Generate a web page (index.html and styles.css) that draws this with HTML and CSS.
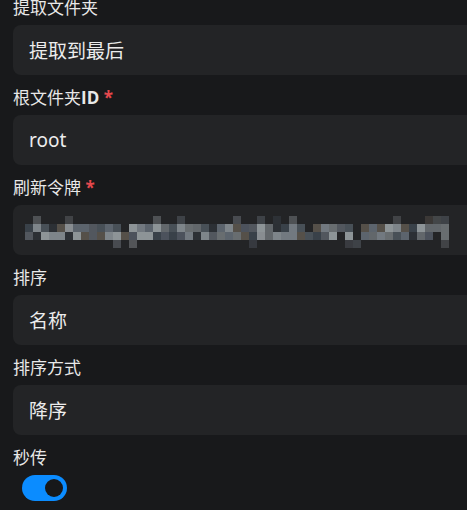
FILE: index.html
```html
<!DOCTYPE html>
<html lang="zh">
<head>
<meta charset="utf-8">
<link rel="stylesheet" href="styles.css">
</head>
<body>
<div class="form">
  <div class="field">
    <label class="label">提取文件夹</label>
    <div class="input">提取到最后</div>
  </div>
  <div class="field">
    <label class="label">根文件夹<span class="latin">ID</span> <span class="req">*</span></label>
    <div class="input">root</div>
  </div>
  <div class="field">
    <label class="label">刷新令牌 <span class="req">*</span></label>
    <div class="input"><svg id="token" class="token" width="430" height="32" viewBox="0 0 430 32"></svg></div>
  </div>
  <div class="field">
    <label class="label">排序</label>
    <div class="input">名称</div>
  </div>
  <div class="field">
    <label class="label">排序方式</label>
    <div class="input">降序</div>
  </div>
  <div class="field">
    <label class="label">秒传</label>
    <div class="switch"><span class="knob"></span></div>
  </div>
</div>
<script src="script.js"></script>
</body>
</html>
```
FILE: styles.css
```css
html, body {
  margin: 0;
  padding: 0;
  background: #18191b;
  overflow: hidden;
}
body {
  font-family: "Noto Sans", "Noto Sans CJK SC", sans-serif;
  color: #e8e8e8;
}
.form {
  width: 500px;
  padding: 0 0 0 13px;
  margin-top: -15px;
  display: flex;
  flex-direction: column;
}
.field {
  display: flex;
  flex-direction: column;
  padding-top: 10px;
}
.label {
  display: block;
  height: 24px;
  line-height: 25px;
  font-size: 17px;
  font-weight: 400;
  color: #e8e8e8;
  margin-bottom: 6px;
}
.latin {
  font-family: "Open Sans", "Noto Sans", sans-serif;
  font-weight: 700;
}
.req {
  color: #e5484d;
  font-weight: 700;
}
.input {
  height: 50px;
  box-sizing: border-box;
  background: #232426;
  border-radius: 8px;
  padding-left: 16px;
  display: flex;
  align-items: center;
  font-size: 19px;
  color: #ececec;
}
.token {
  display: block;
  margin-left: -4px;
  margin-top: 4px;
}
.switch {
  margin-left: 9px;
  width: 45px;
  height: 26px;
  border-radius: 13px;
  background: #0b8cff;
  display: flex;
  align-items: center;
  justify-content: flex-end;
  padding-right: 4px;
  box-sizing: border-box;
}
.knob {
  width: 18px;
  height: 18px;
  border-radius: 50%;
  background: #17181a;
}
```
FILE: script.js
```js
(function () {
  var svg = document.getElementById('token');
  var ns = 'http://www.w3.org/2000/svg';
  var seed = 11;
  function rnd() { seed = (seed * 9301 + 49297) % 233280; return seed / 233280; }
  var cols = 53, size = 8;
  var palette = ['#6d7378','#808890','#5a6068','#3d4650','#8e969c','#4f5860','#747a7e','#a0a8ac','#5e5850','#66707a','#2e3338','#9aa0a4','#535b66'];
  for (var c = 0; c < cols; c++) {
    for (var r = 0; r < 4; r++) {
      var p = rnd();
      var show = (r === 1 || r === 2) ? p < 0.93 : (r === 0 ? p < 0.3 : p < 0.1);
      if (!show) continue;
      var rect = document.createElementNS(ns, 'rect');
      rect.setAttribute('x', c * size);
      rect.setAttribute('y', r * size);
      rect.setAttribute('width', size);
      rect.setAttribute('height', size);
      var col = palette[Math.floor(rnd() * palette.length)];
      rect.setAttribute('fill', col);
      rect.setAttribute('opacity', r === 0 || r === 3 ? 0.4 : 0.85);
      svg.appendChild(rect);
    }
  }
})();
```
